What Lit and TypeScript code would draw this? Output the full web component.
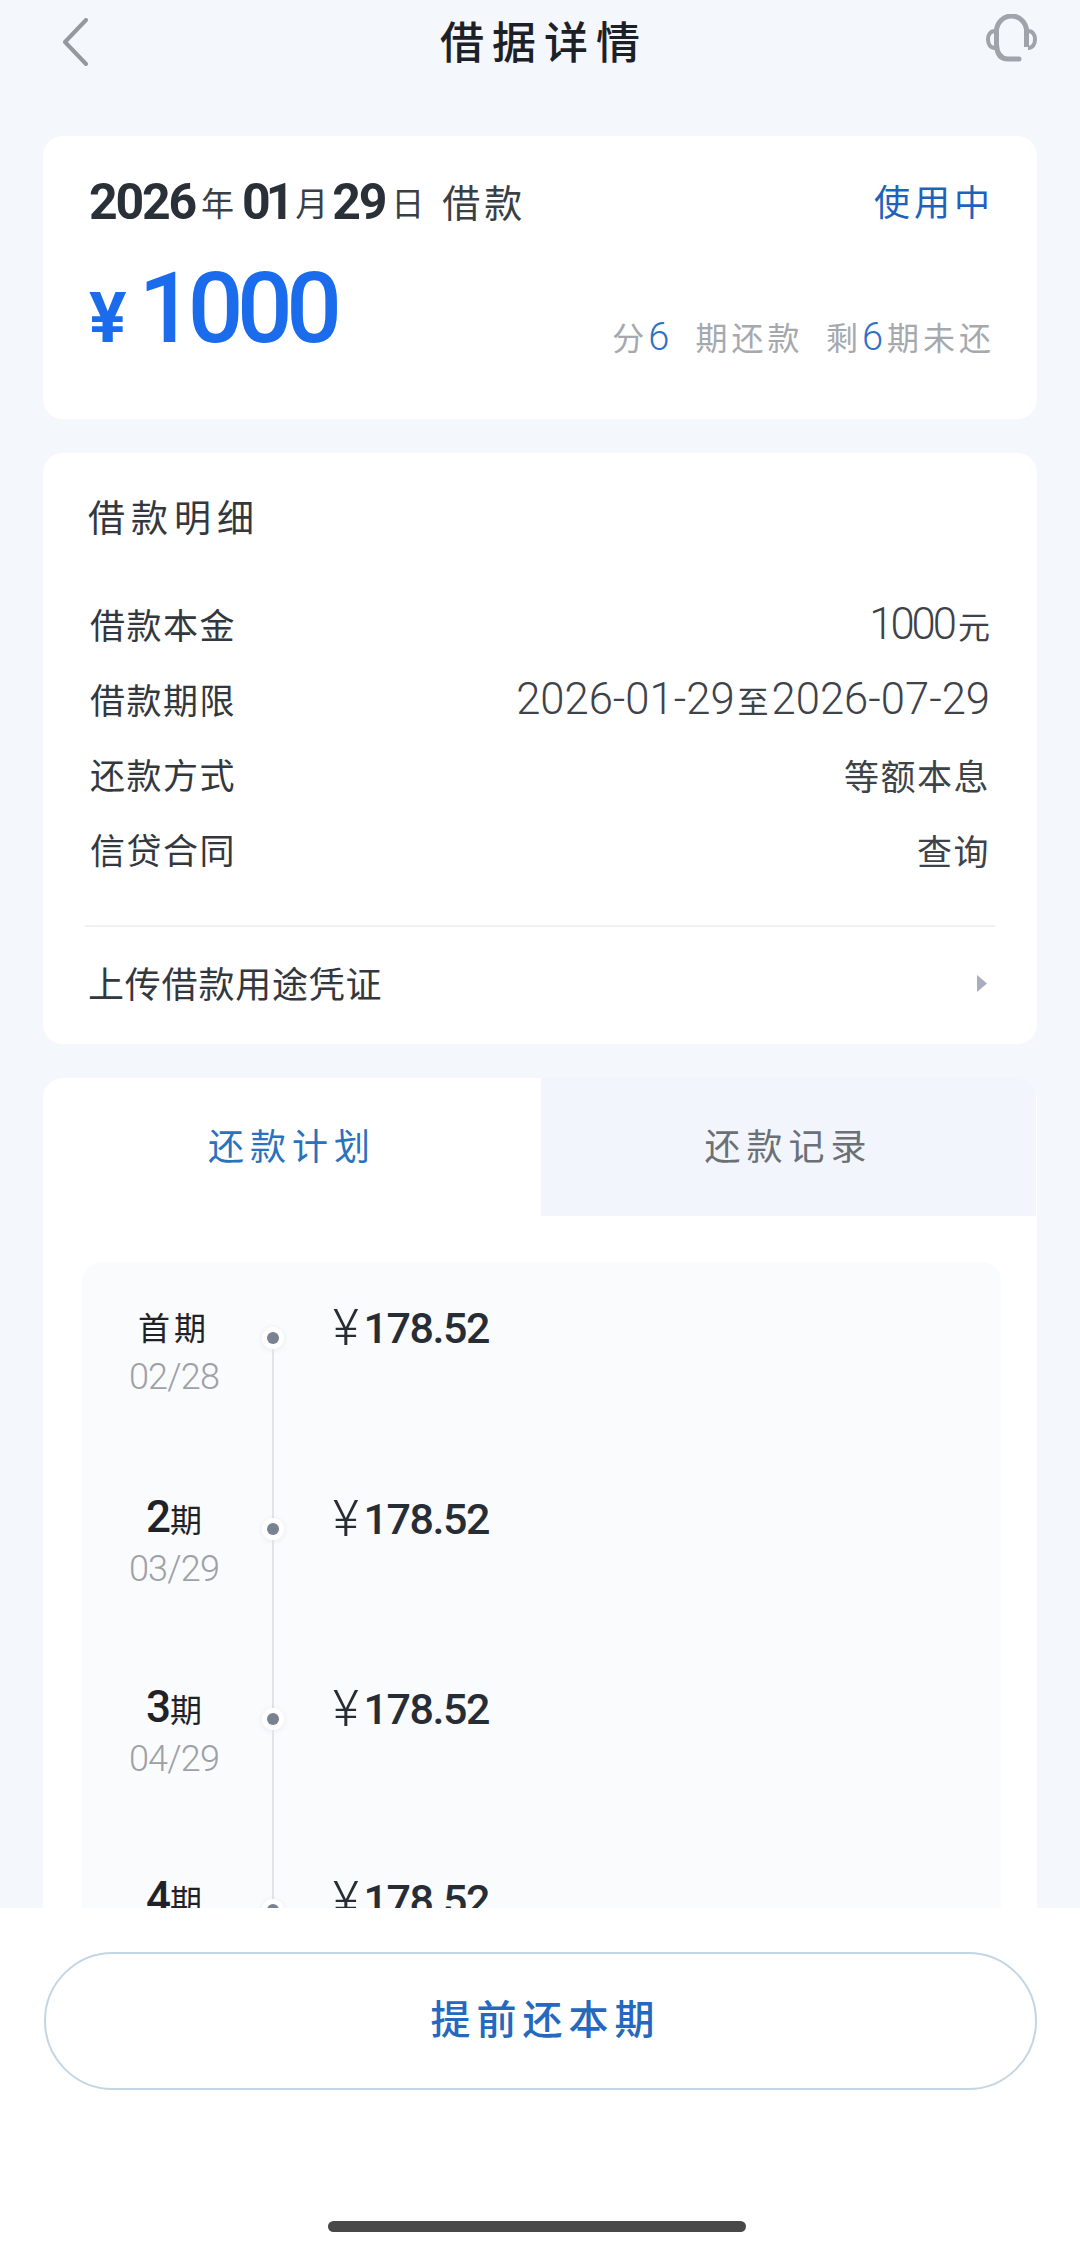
import { LitElement, html, css } from 'lit';
import { customElement } from 'lit/decorators.js';

const DETAILS = [
  { label: '借款本金', value: html`<span class="num tight">1000</span><span class="unit">元</span>` },
  {
    label: '借款期限',
    value: html`<span class="num">2026-01-29</span><span class="to">至</span><span class="num">2026-07-29</span>`
  },
  { label: '还款方式', value: html`<span class="cjk">等额本息</span>` },
  { label: '信贷合同', value: html`<span class="cjk">查询</span>` }
];

const PLAN = [
  { first: true, no: '', date: '02/28' },
  { first: false, no: '2', date: '03/29' },
  { first: false, no: '3', date: '04/29' },
  { first: false, no: '4', date: '05/29' }
];

@customElement('app-root')
export class AppRoot extends LitElement {
  static styles = css`
    :host {
      display: block;
      position: relative;
      width: 1080px;
      height: 2249px;
      overflow: hidden;
      background: #f4f7fc;
      color: #25292f;
      font-family: 'Noto Sans CJK SC', Roboto, sans-serif;
    }

    .header {
      display: grid;
      grid-template-columns: 1fr auto 1fr;
      align-items: center;
      height: 80px;
      padding: 0 43px;
      margin-bottom: 56px;
    }

    .back { display: block; width: 26px; height: 48px; margin: 4px 0 0 19px; }
    .support { display: block; width: 51px; height: 49px; justify-self: end; margin-top: -4px; }

    .title {
      font-size: 44px;
      font-weight: 500;
      line-height: 60px;
      letter-spacing: 8px;
      margin-right: -8px;
      color: #1d2127;
    }

    .cards {
      display: flex;
      flex-direction: column;
      gap: 34px;
      margin: 0 43px;
    }

    .card {
      background: #fff;
      border-radius: 20px;
    }

    .summary {
      height: 283px;
      padding: 40px 46px 0 46px;
      box-sizing: border-box;
    }

    .summary-top,
    .summary-bottom {
      display: flex;
      justify-content: space-between;
    }

    .summary-top { align-items: center; height: 52px; }
    .summary-bottom { align-items: flex-end; margin-top: 29px; }

    .date { display: flex; align-items: center; }

    .date b {
      font-family: Roboto, sans-serif;
      font-size: 50px;
      font-weight: 700;
      letter-spacing: -2.2px;
      color: #2a3038;
    }

    .date b.narrow { letter-spacing: -5px; }

    .date i {
      font-style: normal;
      font-size: 33px;
      margin: 0 8px 0 6px;
      color: #3a3f46;
    }

    .date i.short { margin-right: 4px; }

    .date .what {
      font-size: 38px;
      letter-spacing: 4px;
      margin: -3px 0 0 10px;
      color: #3a3f46;
    }

    .status {
      font-size: 36px;
      letter-spacing: 4px;
      margin: -4px -3px 0 0;
      color: #1f62bd;
    }

    .amount {
      display: flex;
      align-items: baseline;
      color: #1a6ced;
      font-family: Roboto, sans-serif;
      font-weight: 500;
      line-height: 104px;
    }

    .amount .yen { font-size: 70px; font-weight: 700; margin-right: 12px; }
    .amount .big { font-size: 98px; letter-spacing: -6.5px; }

    .terms {
      font-size: 32px;
      letter-spacing: 4px;
      line-height: 48px;
      margin: 0 -4px 9px 0;
      color: #a5a9ae;
      white-space: pre;
    }

    .terms em {
      font-family: Roboto, sans-serif;
      font-style: normal;
      font-weight: 300;
      font-size: 38px;
      color: #2f6fc4;
    }

    .detail {
      height: 591px;
      padding: 39px 42px 0;
      box-sizing: border-box;
    }

    .detail-title {
      font-size: 37px;
      line-height: 48px;
      letter-spacing: 6px;
      padding-left: 3px;
      color: #33383e;
    }

    .rows {
      display: flex;
      flex-direction: column;
      gap: 15px;
      margin-top: 53px;
      padding: 0 5px;
    }

    .row {
      display: flex;
      justify-content: space-between;
      align-items: center;
      height: 60px;
      font-size: 35px;
      color: #33383e;
    }

    .row .label { letter-spacing: 1.5px; }
    .row .value { display: flex; align-items: center; padding-top: 3px; color: #3e434a; }

    .num {
      font-family: Roboto, sans-serif;
      font-weight: 300;
      font-size: 43.6px;
    }

    .tight { letter-spacing: -3px; }
    .to { font-size: 31px; margin: 0 3px; }
    .unit { font-size: 32px; margin-left: 4px; }
    .cjk { letter-spacing: 1.5px; }

    .upload {
      display: flex;
      justify-content: space-between;
      align-items: center;
      height: 110px;
      margin-top: 47px;
      padding: 0 8px 0 3px;
      border-top: 2px solid #f0f1f4;
      font-size: 36px;
      letter-spacing: 0.8px;
      color: #33383e;
    }

    .arrow { display: block; width: 10px; height: 17px; margin-top: 3px; }

    .plan { overflow: hidden; padding-bottom: 60px; }

    .tabs {
      display: grid;
      grid-template-columns: 498px 1fr;
      height: 138px;
      font-size: 36px;
      letter-spacing: 6px;
    }

    .tab {
      display: flex;
      align-items: center;
      justify-content: center;
      padding-bottom: 6px;
    }

    .tab.on { color: #2a72c0; }
    .tab.off { color: #6b7075; background: #f2f5fb; margin-right: 1px; }

    .panel {
      margin: 46px 36px 0 39px;
      padding: 43px 0 0;
      background: #fafbfd;
      border-radius: 20px;
    }

    .step {
      display: flex;
      align-items: flex-start;
      height: 190.5px;
    }

    .when {
      width: 176px;
      padding-left: 4px;
      text-align: center;
    }

    .period {
      font-size: 32px;
      line-height: 42px;
      color: #1f2329;
    }

    .period b {
      font-family: Roboto, sans-serif;
      font-weight: 500;
      font-size: 44px;
      letter-spacing: -1px;
    }

    .period .head { letter-spacing: 4px; }

    .due {
      font-family: Roboto, sans-serif;
      font-weight: 300;
      font-size: 36px;
      line-height: 50px;
      letter-spacing: -0.8px;
      margin-top: 5px;
      color: #9da1a6;
    }

    .node {
      position: relative;
      width: 22px;
      height: 22px;
      margin-top: 22px;
      border-radius: 50%;
      background: #fff;
      box-shadow: 0 1px 6px rgba(30, 40, 60, 0.08);
      display: flex;
      align-items: center;
      justify-content: center;
    }

    .node::before {
      content: '';
      width: 12px;
      height: 12px;
      border-radius: 50%;
      background: #798290;
    }

    .node::after {
      content: '';
      position: absolute;
      top: 22px;
      left: 10px;
      width: 2px;
      height: 168.5px;
      background: #e0e3e8;
    }

    .money {
      display: flex;
      align-items: center;
      margin: 1px 0 0 49px;
      line-height: 44px;
      font-family: Roboto, sans-serif;
      font-weight: 500;
      font-size: 43px;
      letter-spacing: -1.4px;
      color: #272d35;
    }

    .money span { font-weight: 300; font-size: 50px; margin-right: 6px; }

    .footer {
      position: absolute;
      left: 0;
      right: 0;
      top: 1908px;
      bottom: 0;
      background: #fff;
    }

    .cta {
      display: flex;
      align-items: center;
      justify-content: center;
      box-sizing: border-box;
      height: 138px;
      margin: 44px 43px 0 44px;
      padding: 0 0 8px 10px;
      border: 2px solid #c3d6e4;
      border-radius: 69px;
      font-size: 40px;
      font-weight: 500;
      letter-spacing: 6px;
      color: #2468c0;
    }

    .home {
      position: absolute;
      left: 328px;
      top: 313px;
      width: 418px;
      height: 11px;
      border-radius: 6px;
      background: #484848;
    }
  `;

  render() {
    return html`
      <div class="header">
        <svg class="back" viewBox="0 0 26 48" fill="none">
          <path d="M24 2 L3 24 L24 46" stroke="#94989f" stroke-width="4" stroke-linecap="round" stroke-linejoin="round" />
        </svg>
        <div class="title">借据详情</div>
        <svg class="support" viewBox="0 0 51 49" fill="none" stroke="#a0a3aa">
          <path d="M10.5 33 V17 a15 15 0 0 1 30 0 V33" stroke-width="5" />
          <path d="M10.5 31 C11 40 15 45 22 45 H33" stroke-width="5" stroke-linecap="round" />
          <path d="M9 17 C4 17 2 21 2 25.5 C2 30 4 34 9 34" stroke-width="4" />
          <path d="M42 17 C47 17 49 21 49 25.5 C49 30 47 34 42 34" stroke-width="4" />
        </svg>
      </div>

      <div class="cards">
        <section class="card summary">
          <div class="summary-top">
            <div class="date">
              <b>2026</b><i>年</i><b class="narrow">01</b><i class="short">月</i><b>29</b><i>日</i>
              <span class="what">借款</span>
            </div>
            <div class="status">使用中</div>
          </div>
          <div class="summary-bottom">
            <div class="amount"><span class="yen">¥</span><span class="big">1000</span></div>
            <div class="terms">分<em>6</em>  期还款  剩<em>6</em>期未还</div>
          </div>
        </section>

        <section class="card detail">
          <div class="detail-title">借款明细</div>
          <div class="rows">
            ${DETAILS.map(
              (d) => html`
                <div class="row">
                  <span class="label">${d.label}</span>
                  <span class="value">${d.value}</span>
                </div>
              `
            )}
          </div>
          <div class="upload">
            <span>上传借款用途凭证</span>
            <svg class="arrow" viewBox="0 0 10 17"><polygon points="0,0 10,8.5 0,17" fill="#a9adc0" /></svg>
          </div>
        </section>

        <section class="card plan">
          <div class="tabs">
            <div class="tab on">还款计划</div>
            <div class="tab off">还款记录</div>
          </div>
          <div class="panel">
            ${PLAN.map(
              (p) => html`
                <div class="step">
                  <div class="when">
                    <div class="period">
                      ${p.first ? html`<span class="head">首期</span>` : html`<b>${p.no}</b>期`}
                    </div>
                    <div class="due">${p.date}</div>
                  </div>
                  <div class="node"></div>
                  <div class="money"><span>¥</span>178.52</div>
                </div>
              `
            )}
          </div>
        </section>
      </div>

      <div class="footer">
        <div class="cta">提前还本期</div>
        <div class="home"></div>
      </div>
    `;
  }
}
